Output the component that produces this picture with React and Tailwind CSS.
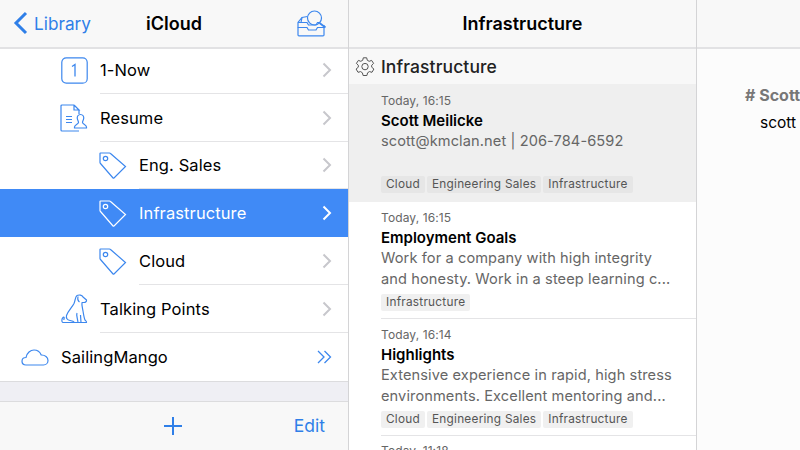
import React from 'react'

const blue = '#3c87ee'

function Chevron({ white }) {
  return (
    <svg width="10" height="16" viewBox="0 0 10 16" fill="none" stroke={white ? '#ffffff' : '#c7c7cc'} strokeWidth="2">
      <path d="M1.5 1.5 L8 8 L1.5 14.5" />
    </svg>
  )
}

function OneIcon() {
  return (
    <svg width="27" height="27" viewBox="0 0 27 27" fill="none" stroke={blue} strokeWidth="1.2">
      <rect x="0.8" y="0.8" width="25.4" height="25.4" rx="4.5" />
      <path d="M11 9.5 L14 7.5 V19.5" strokeWidth="1.3" />
    </svg>
  )
}

function ResumeIcon() {
  return (
    <svg width="28" height="28" viewBox="0 0 28 28" fill="none" stroke={blue} strokeWidth="1.2">
      <path d="M14 1 H2 Q1 1 1 2 V26 Q1 27 2 27 H19" />
      <path d="M14 1 V6 H19 L14 1 M19 6 V10" />
      <path d="M6 12.5 H12 M6 15.5 H12 M6 18.5 H12" />
      <path d="M20.5 10.5 C18 10.5 17 12.5 17.3 14.5 C17.5 16.2 18.5 17 18.5 18.5 C18.5 20 14.5 20.5 14.5 23 V24 H26.5 V23 C26.5 20.5 22.5 20 22.5 18.5 C22.5 17 23.5 16.2 23.7 14.5 C24 12.5 23 10.5 20.5 10.5 Z" />
    </svg>
  )
}

function TagIcon({ white }) {
  return (
    <svg width="28" height="27" viewBox="0 0 28 27" fill="none" stroke={white ? '#ffffff' : blue} strokeWidth="1.2">
      <path d="M1 1.5 Q1 1 1.5 1 H10.5 Q11 1 11.5 1.5 L26.5 14.5 L15 26 Q14.5 26.3 14 26 L1.5 11.5 Q1 11 1 10.5 Z" />
      <circle cx="6.5" cy="6.5" r="2.2" />
    </svg>
  )
}

function DogIcon() {
  return (
    <svg width="27" height="30" viewBox="0 0 27 30" fill="none" stroke={blue} strokeWidth="1.2" strokeLinejoin="round">
      <path d="M16 1.5 C18 0.5 21 1 22 3 L25.5 6 C25.8 7.5 24.5 8.5 23 8.5 L21 8.5 C20.5 11 21.5 14 22 17 C22.5 20 23 24 24 26 C25 27 26 27.5 25.5 28.5 H1.8 C0.5 28 0.5 25 2 23.5 C3 22.3 3.5 23.5 3 25 L2.8 26" />
      <path d="M16 1.5 C14 3 14.5 6 13 9.5 C11 13.5 7 17 5.5 21.5 C5 24 6 26 9 26.5 C11 26.8 12.5 27 13.5 28.5" />
      <path d="M16 19 C15 21 16.5 24 17 28.5 M19.5 21 L20 28.5" />
      <path d="M17 2.5 C16.5 5 17 7 18.5 8" />
    </svg>
  )
}

function CloudIcon() {
  return (
    <svg width="28" height="17" viewBox="0 0 28 17" fill="none" stroke={blue} strokeWidth="1.2">
      <path d="M5 16 C2.5 16 1 14.3 1 12.2 C1 10 2.7 8.5 5 8.5 C5.8 4 9.5 1 13 1 C16.5 1 19 3 20.2 6 C24 5.8 27 8.5 27 11.5 C27 14 25 16 22.5 16 Z" />
    </svg>
  )
}

function DoubleChevron() {
  return (
    <svg width="15" height="14" viewBox="0 0 15 14" fill="none" stroke={blue} strokeWidth="1.3">
      <path d="M1 1 L7 7 L1 13" />
      <path d="M7.5 1 L13.5 7 L7.5 13" />
    </svg>
  )
}

function InboxSearchIcon() {
  return (
    <svg width="30" height="27" viewBox="0 0 30 27" fill="none" stroke={blue} strokeWidth="1.2">
      <circle cx="17.5" cy="8" r="7" />
      <path d="M22.5 13 L28.5 17.5" strokeWidth="1.8" />
      <path d="M10.5 6.5 L5 7.5 L1 12.5 V17.5 H10 L11.5 20 H19 L20.5 17.5 H27 V15" />
      <path d="M1 12.5 H10 L11.5 15 H19 L20.5 12.5 H23" />
      <path d="M1 17.5 V25 Q1 25.8 2 25.8 H26 Q27 25.8 27 25 V17.5" />
      <path d="M5 7.5 L4 12.5" />
    </svg>
  )
}

function GearIcon() {
  return (
    <svg width="20" height="20" viewBox="0 0 20 20" fill="none" stroke="#555555" strokeWidth="1" strokeLinejoin="round">
      <path d="M8.3 0.8 H11.7 L12.3 3.3 L14.2 4.3 L16.6 3.4 L18.6 6.4 L16.7 8.2 V10.2 L18.9 12 L17 15.3 L14.4 14.6 L12.6 15.8 L11.9 18.5 H8.1 L7.4 15.8 L5.6 14.6 L3 15.3 L1.1 12 L3.3 10.2 V8.2 L1.4 6.4 L3.4 3.4 L5.8 4.3 L7.7 3.3 Z" />
      <circle cx="10" cy="9.6" r="3.2" />
    </svg>
  )
}

function NavRow({ icon, label, indent, selected, last, tail, short }) {
  return (
    <div className={(short ? 'h-[47px] ' : 'h-12 ') + (selected ? 'flex shrink-0 items-center bg-[#408af6] text-white' : 'flex shrink-0 items-center bg-white text-black')}>
      <div className={indent === 2 ? 'flex w-[139px] shrink-0 justify-end pr-[12px]' : indent === 1 ? 'flex w-[100px] shrink-0 justify-end pr-[12px]' : 'flex w-[61px] shrink-0 justify-end pr-[12px]'}>
        {icon}
      </div>
      <div className={last || selected ? 'flex h-full flex-1 items-center justify-between pr-[16px]' : 'flex h-full flex-1 items-center justify-between border-b border-[#e4e4e6] pr-[16px]'}>
        <span className="pt-[1px] text-[16.5px] tracking-[0.1px]">{label}</span>
        {tail || <Chevron white={selected} />}
      </div>
    </div>
  )
}

function Tag({ children, dark }) {
  return (
    <span className={dark ? 'rounded-[2px] bg-[#e6e6e6] px-[5px] text-[11.8px] leading-[17px] tracking-[0.25px] text-[#555555]' : 'rounded-[2px] bg-[#f0f0f0] px-[5px] text-[11.8px] leading-[17px] tracking-[0.25px] text-[#555555]'}>
      {children}
    </span>
  )
}

function Note({ time, title, lines, tags, selected, tagTop }) {
  return (
    <div className={selected ? 'h-[118px] shrink-0 bg-[#efefef] pl-[32px] pt-[8px]' : 'h-[117px] shrink-0 bg-white pl-[32px]'}>
      <div className={selected ? 'flex h-full flex-col' : 'flex h-full flex-col border-b border-[#e4e4e6] pt-[7px]'}>
        <div className="text-[12px] leading-[18px] tracking-[0.1px] text-[#666666]">{time}</div>
        <div className="text-[15px] font-semibold leading-[21px] text-black">{title}</div>
        <div className="text-[14.6px] leading-[21px] tracking-[0.1px] text-[#666666]">
          {lines.map(l => <div key={l} className="whitespace-nowrap">{l}</div>)}
        </div>
        <div className={tagTop}>
          <div className="flex gap-[2px]">
            {tags.map(t => <Tag key={t} dark={selected}>{t}</Tag>)}
          </div>
        </div>
      </div>
    </div>
  )
}

export default function App() {
  return (
    <div className="flex h-[450px] w-[800px] overflow-hidden bg-white font-['Inter','Liberation_Sans',sans-serif]">
      <div className="flex w-[349px] shrink-0 flex-col border-r border-[#d4d4d6]">
        <div className="relative flex h-[49px] shrink-0 items-center justify-between border-b-2 border-[#e2e2e4] bg-[#f8f8f8] pl-[13px] pr-[21px]">
          <div className="flex items-center gap-[6px] text-[#2f7fe8]">
            <svg width="15" height="24" viewBox="0 0 15 24" fill="none" stroke="#2f7fe8" strokeWidth="3">
              <path d="M13 2 L3 12 L13 22" />
            </svg>
            <span className="text-[17.2px]">Library</span>
          </div>
          <span className="absolute left-[146px] text-[18px] font-semibold text-black">iCloud</span>
          <InboxSearchIcon />
        </div>
        <div className="-mt-[3px]">
          <NavRow indent={1} label="1-Now" icon={<OneIcon />} />
        </div>
        <NavRow indent={1} label="Resume" icon={<ResumeIcon />} />
        <NavRow indent={2} label="Eng. Sales" icon={<TagIcon />} short />
        <NavRow indent={2} label="Infrastructure" icon={<TagIcon white />} selected />
        <NavRow indent={2} label="Cloud" icon={<TagIcon />} />
        <NavRow indent={1} label="Talking Points" icon={<DogIcon />} />
        <NavRow indent={0} label="SailingMango" icon={<CloudIcon />} last tail={<DoubleChevron />} />
        <div className="flex-1 border-y border-[#dcdcde] bg-[#efeff4]" />
        <div className="flex h-[48px] shrink-0 items-center bg-[#f8f8f8] pr-[23px]">
          <div className="flex flex-1 justify-end pr-[111px]">
            <svg width="20" height="20" viewBox="0 0 20 20" stroke="#2f7fe8" strokeWidth="2">
              <path d="M10 1 V19 M1 10 H19" />
            </svg>
          </div>
          <span className="text-[17.5px] text-[#2f7fe8]">Edit</span>
        </div>
      </div>

      <div className="flex w-[348px] shrink-0 flex-col overflow-hidden border-r border-[#d4d4d6]">
        <div className="flex h-[49px] shrink-0 items-center justify-center border-b-2 border-[#e2e2e4] bg-[#f8f8f8]">
          <span className="text-[18px] font-semibold text-black">Infrastructure</span>
        </div>
        <div className="flex h-[35px] shrink-0 items-center gap-[6px] bg-[#f8f8f8] pl-[6px]">
          <GearIcon />
          <span className="pt-[1px] text-[17.5px] font-medium tracking-[0.1px] text-[#222222]">Infrastructure</span>
        </div>
        <Note selected time="Today, 16:15" title="Scott Meilicke" lines={['scott@kmclan.net | 206-784-6592']} tags={['Cloud', 'Engineering Sales', 'Infrastructure']} tagTop="mt-[24px]" />
        <Note time="Today, 16:15" title="Employment Goals" lines={['Work for a company with high integrity', 'and honesty. Work in a steep learning c...']} tags={['Infrastructure']} tagTop="mt-[4px]" />
        <Note time="Today, 16:14" title="Highlights" lines={['Extensive experience in rapid, high stress', 'environments. Excellent mentoring and...']} tags={['Cloud', 'Engineering Sales', 'Infrastructure']} tagTop="mt-[4px]" />
        <div className="shrink-0 bg-white pl-[32px] pt-[6px] text-[12px] leading-[18px] tracking-[0.1px] text-[#666666]">Today, 11:18</div>
      </div>

      <div className="flex min-w-0 flex-1 flex-col">
        <div className="h-[49px] shrink-0 border-b-2 border-[#e2e2e4] bg-[#f8f8f8]" />
        <div className="flex-1 overflow-hidden bg-[#fcfcfc] pl-[48px] pt-[35px]">
          <div className="whitespace-nowrap text-[16px] font-bold leading-[22px] text-[#777777]"># Scott</div>
          <div className="mt-[6px] whitespace-nowrap pl-[15px] text-[15.5px] leading-[22px] text-black">scott</div>
        </div>
      </div>
    </div>
  )
}
